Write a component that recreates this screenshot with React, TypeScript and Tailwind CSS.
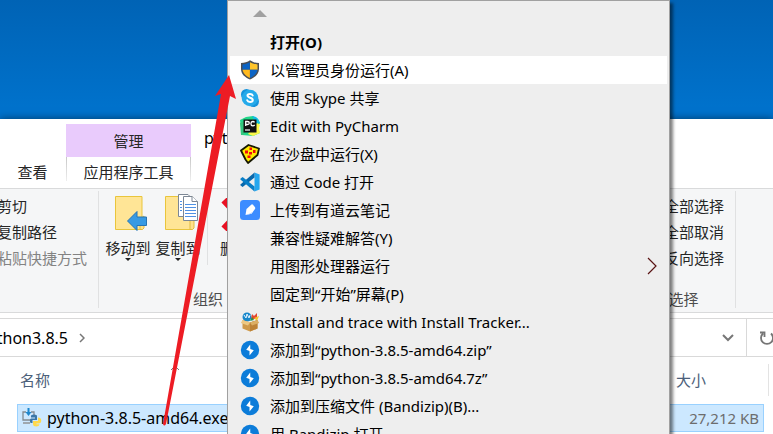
import React from "react";

const FONT = "font-['Noto_Sans','Noto_Sans_CJK_SC',sans-serif]";

function ShieldIcon() {
  return (
    <svg viewBox="0 0 20 20" className="w-5 h-5">
      <path d="M10 .2 C7.500 2 4.500 3 1 3 V9 C1 14 5 17.500 10 19.500 C15 17.500 19 14 19 9 V3 C15.500 3 12.500 2 10 .2Z" fill="#4b4f55" />
      <path d="M9.800 2.200 C7.500 3.500 5.500 4.200 2.500 4.400 V9.800 H9.800Z" fill="#0b64c5" />
      <path d="M10 2.200 C12.500 3.500 14.500 4.200 17.500 4.400 V9.800 H10Z" fill="#ffc52c" />
      <path d="M2.600 9.800 H9.900 V18 C6 16.300 3 13.500 2.600 9.800Z" fill="#ffb91e" />
      <path d="M10 9.800 H17.400 C17 13.500 14 16.300 10 18Z" fill="#0b64c5" />
    </svg>
  );
}

function SkypeIcon() {
  return (
    <svg viewBox="0 0 20 20" className="w-5 h-5">
      <circle cx="6.500" cy="6.500" r="5.500" fill="#1593dc" />
      <circle cx="13.500" cy="13.500" r="5.500" fill="#1593dc" />
      <circle cx="10" cy="10" r="8.300" fill="#25aaea" />
      <path d="M12.700 7.500 C12.300 6.300 11.200 6 9.900 6 C8.500 6 7.500 6.600 7.500 7.600 C7.500 10.300 12.800 9.200 12.800 12.100 C12.800 13.400 11.600 14 10.100 14 C8.700 14 7.600 13.500 7.200 12.300" fill="none" stroke="#fff" strokeWidth="2" strokeLinecap="round" />
    </svg>
  );
}

function PyCharmIcon() {
  return (
    <svg viewBox="0 0 20 20" className="w-5 h-5">
      <path d="M0 4 L6 1 L13 0 L18 3 L20 7 L17 11 L20 17 L13 20 L2 19Z" fill="#21d789" />
      <path d="M12 0 L16 1 L18 3 L20 7 L16 8Z" fill="#11bde4" />
      <path d="M17 7 L20 9 L19 12 L20 17 L13 20 L8 18Z" fill="#fcf84a" />
      <path d="M0 7 L4 5 V19 L1 19Z" fill="#35c77e" />
      <rect x="3.500" y="3.500" width="13" height="13" fill="#111" />
      <path d="M5.700 10 V5.500 H7.500 Q9.300 5.500 9.300 7 Q9.300 8.500 7.500 8.500 H5.700 M14.600 6.400 Q13.800 5.400 12.700 5.500 Q10.900 5.700 10.900 7.700 Q10.900 9.700 12.800 9.900 Q13.900 9.900 14.700 9" fill="none" stroke="#fff" strokeWidth="1.300" />
      <path d="M5 14 H10" stroke="#fff" strokeWidth="1.200" />
    </svg>
  );
}

function SandboxIcon() {
  return (
    <svg viewBox="0 0 20 20" className="w-5 h-5">
      <path d="M1 6.500 L8.500 1 L19 4.500 L17.500 11 L8 19 L5.500 15.500Z" fill="#ffeb00" stroke="#171700" strokeWidth="1.800" strokeLinejoin="round" />
      <g fill="#f00b0b">
        <rect x="9.500" y="3.500" width="2.500" height="2.500" />
        <rect x="5" y="6.500" width="3" height="3" />
        <rect x="9" y="8" width="3" height="2.500" />
        <rect x="13" y="6" width="2.500" height="3" />
        <rect x="7.500" y="11.500" width="3" height="2.500" />
      </g>
    </svg>
  );
}

function CodeIcon() {
  return (
    <svg viewBox="0 0 20 20" className="w-5 h-5">
      <path d="M14.500 .4 L19.600 2.600 V17.400 L14.500 19.600Z" fill="#25a7ef" />
      <path d="M14.500 .4 V5.500 L2.600 15 L.4 13.200 V12.500Z" fill="#0868ac" />
      <path d="M14.500 19.600 V14.500 L2.600 5 L.4 6.800 V7.500Z" fill="#087fc8" />
    </svg>
  );
}

function YoudaoIcon() {
  return (
    <svg viewBox="0 0 20 20" className="w-5 h-5">
      <rect width="20" height="20" rx="3.500" fill="#3c8cff" />
      <path d="M5.500 15 L6.500 9 L11.500 4.500 Q12.300 4 13 4.800 L15 7.200 Q15.500 8 15 9 L11.500 13.800Z" fill="#fff" />
      <path d="M5.500 15 L11.500 13.800 L13 11.700 Q9 14 5.500 15Z" fill="#b9d6ff" />
    </svg>
  );
}

function TrackerIcon() {
  return (
    <svg viewBox="0 0 20 20" className="w-5 h-5">
      <circle cx="7" cy="5" r="4.500" fill="#1787cb" />
      <path d="M4 3 L6 6 L7 2 L9 6 L10 3" fill="none" stroke="#e7f5ff" />
      <path d="M11 7 L12 2 L14 4 L17 1 L17 7Z" fill="#e5472f" />
      <path d="M14 6 L19 4 L17 9Z" fill="#f5c32f" />
      <path d="M10 9 L12 5 L14 8Z" fill="#2b9445" />
      <path d="M2.500 8 L10 10.500 L17.500 8 V16.500 L10 19.500 L2.500 16.500Z" fill="#d09a4a" />
      <path d="M10 10.500 L17.500 8 V16.500 L10 19.500Z" fill="#bd8236" />
      <path d="M2.500 8 L.8 11 L8 13.500 L10 10.500Z" fill="#edc883" />
      <path d="M17.500 8 L19.200 11 L12 13.500 L10 10.500Z" fill="#dcae63" />
    </svg>
  );
}

function BandizipIcon() {
  return (
    <svg viewBox="0 0 20 20" className="w-5 h-5">
      <circle cx="10" cy="10" r="9.200" fill="#0c7cd9" />
      <path d="M10.200 4.500 L6.200 9.800 L9.500 10.900 L9.500 15.500 L13.800 10.300 L10.300 9Z" fill="#fff" />
    </svg>
  );
}

const menuItems = [
  { label: "打开(O)", bold: true },
  { label: "以管理员身份运行(A)", icon: ShieldIcon, active: true },
  { label: "使用 Skype 共享", icon: SkypeIcon },
  { label: "Edit with PyCharm", icon: PyCharmIcon },
  { label: "在沙盘中运行(X)", icon: SandboxIcon },
  { label: "通过 Code 打开", icon: CodeIcon },
  { label: "上传到有道云笔记", icon: YoudaoIcon },
  { label: "兼容性疑难解答(Y)" },
  { label: "用图形处理器运行", submenu: true },
  { label: "固定到“开始”屏幕(P)" },
  { label: "Install and trace with Install Tracker...", icon: TrackerIcon },
  { label: "添加到“python-3.8.5-amd64.zip”", icon: BandizipIcon },
  { label: "添加到“python-3.8.5-amd64.7z”", icon: BandizipIcon },
  { label: "添加到压缩文件 (Bandizip)(B)...", icon: BandizipIcon },
  { label: "用 Bandizip 打开", icon: BandizipIcon },
];

function ContextMenu() {
  return (
    <div
      role="menu"
      className="absolute top-0 left-[227px] w-[443px] h-full overflow-hidden bg-[#eeeeee] border border-b-0 border-[#a0a0a0] shadow-[3px_3px_3px_rgba(0,0,0,0.5)]"
    >
      <div className="h-[27px] pl-[25px] pt-[9px]">
        <svg viewBox="0 0 14 7" className="w-[14px] h-[7px]">
          <path d="M7 0 L14 7 H0Z" fill="#a0a0a0" />
        </svg>
      </div>
      <div className="px-[2px]">
        {menuItems.map(({ label, icon: Icon, bold, active, submenu }) => (
          <button
            key={label}
            role="menuitem"
            className={`flex items-center w-full h-7 px-[10px] text-left text-black ${
              active ? "bg-white" : ""
            } ${bold ? "font-bold" : ""}`}
          >
            <span className="w-5 h-5 mr-[10px] shrink-0">{Icon && <Icon />}</span>
            <span className="flex-1 whitespace-nowrap">{label}</span>
            {submenu && (
              <svg viewBox="0 0 10 18" className="w-[10px] h-[18px]">
                <path d="M1 1 L9 9 L1 17" fill="none" stroke="#5a1414" strokeWidth="1.200" />
              </svg>
            )}
          </button>
        ))}
      </div>
    </div>
  );
}

function FolderIcon({ copy }: { copy?: boolean }) {
  return (
    <svg viewBox="0 0 34 38" className="w-[34px] h-[38px] shrink-0">
      <path d="M1.500 3.500 H28 V36.500 H1.500Z" fill="#ffe596" stroke="#e9c53c" />
      <path d="M26 36.500 V26 L30 23 V35 L28.500 36.500Z" fill="#ffe08a" stroke="#e2bb3f" />
      {copy ? (
        <g stroke="#7c8794" fill="#fff">
          <path d="M14.500 1.500 H24 L28 5.500 V23.500 H14.500Z" />
          <path d="M19.500 3.500 H28 L33.500 8.500 V27.500 H19.500Z" />
          <path d="M28 3.500 V8.500 H33.500" />
          <path d="M16 8.500 H18 M16 11.500 H18 M16 14.500 H18 M16 17.500 H18 M21 11.500 H32 M21 14.500 H32 M21 17.500 H32 M21 20.500 H32 M21 23.500 H32" stroke="#4f91e4" />
        </g>
      ) : (
        <path d="M13.500 28 L23 18.500 V24 H32.500 V32.500 H23 V37.500Z" fill="#389ae3" stroke="#2774b3" />
      )}
    </svg>
  );
}

function RibbonButton({ label, copy }: { label: string; copy?: boolean }) {
  return (
    <button className="flex flex-col items-center w-[50px] whitespace-nowrap leading-5">
      <span className="pl-[5px]">
        <FolderIcon copy={copy} />
      </span>
      <span className="mt-[7px]">{label}</span>
      <svg viewBox="0 0 6 3" className="w-[6px] h-[3px]">
        <path d="M0 0 H6 L3 3Z" fill="#222" />
      </svg>
    </button>
  );
}

function Ribbon() {
  return (
    <div className="flex h-[125px] pt-[2px] pb-1 bg-[#f5f6f7] border-y border-[#d9dadb] text-[#262626] leading-[26px]">
      <div className="flex justify-end w-[99px] pr-[11px] border-r border-[#e0e1e2]">
        <div className="flex flex-col items-start shrink-0 whitespace-nowrap pt-[2px]">
          <button>剪切</button>
          <button>复制路径</button>
          <button className="text-[#838383]">粘贴快捷方式</button>
        </div>
      </div>
      <div className="flex flex-col w-[218px] shrink-0">
        <div className="flex items-start h-[74px]">
          <div className="flex items-start w-[109px] h-full pl-1 pt-[2px] border-r border-[#e0e1e2]">
            <RibbonButton label="移动到" />
            <RibbonButton label="复制到" copy />
          </div>
          <button className="flex flex-col items-start pl-3 pt-[7px] leading-5">
            <svg viewBox="0 0 34 33" className="w-[34px] h-[33px]">
              <path d="M4 2 L31 31 M31 2 L4 31" stroke="#e81123" strokeWidth="7" />
            </svg>
            <span className="mt-[7px]">删除</span>
          </button>
        </div>
        <span className="mt-auto -mb-1 text-center text-[#4d4d4d]">组织</span>
      </div>
      <div className="flex flex-col w-[104px] mr-[37px] ml-auto border-r border-[#e0e1e2] whitespace-nowrap">
        <div className="flex flex-col items-end pr-[11px] pt-[2px]">
          <button>全部选择</button>
          <button>全部取消</button>
          <button>反向选择</button>
        </div>
        <span className="mt-auto -mb-1 text-center text-[#4d4d4d]">选择</span>
      </div>
    </div>
  );
}

function FileIcon() {
  return (
    <svg viewBox="0 0 20 20" className="w-5 h-5">
      <path d="M4 4 H1 V12 H9 M9 4 H12 V7" fill="none" stroke="#848b91" strokeWidth="1.300" />
      <path d="M1 15 H8" stroke="#9ba1a6" strokeWidth="1.800" />
      <path d="M6.500 0 V6" stroke="#1d87cd" strokeWidth="2" />
      <path d="M3.500 4 H9.500 L6.500 8Z" fill="#1d87cd" />
      <path d="M9 7.500 Q12 5.500 15 7.500 V12 H10.500 V15 H8.500 Q7 11.500 9 10.500 H13 V9.500 H9Z" fill="#3b77a8" />
      <path d="M16 9.500 Q19 9.500 19.200 12 Q19.500 15 17 15.500 H14.500 V16.200 H17.500 Q17 18.500 14.500 18.500 Q11 18.500 11 16 V13 H16Z" fill="#ffd94d" />
    </svg>
  );
}

function Explorer() {
  return (
    <div className="flex-1 bg-white shadow-[0_0_8px_rgba(0,0,0,0.5)]">
      <div className="flex items-start h-[69px] pt-[5px] text-[#262626]">
        <button className="w-[50px] h-[30px] mt-[33px] mr-4 pl-[15px] whitespace-nowrap">查看</button>
        <div className="flex flex-col w-[125px] shrink-0">
          <div className="flex items-center justify-center h-[33px] bg-[#e9cbfc]">管理</div>
          <button className="relative h-[30px] whitespace-nowrap">
            <span className="absolute inset-y-0 left-0 w-px h-6 bg-linear-to-b from-[#c8c8c8] to-[#eeeeee]" />
            应用程序工具
            <span className="absolute inset-y-0 right-0 w-px h-6 bg-linear-to-b from-[#c8c8c8] to-[#eeeeee]" />
          </button>
        </div>
        <span className="ml-[13px] mt-1 text-base/5 text-black">python3.8.5</span>
      </div>
      <Ribbon />
      <div className="flex items-center h-[39px] mt-[5px] border-y border-[#d9d9d9] text-black">
        <span className="flex justify-end w-[68px] whitespace-nowrap text-base/5">python3.8.5</span>
        <svg viewBox="0 0 6 10" className="w-[6px] h-[10px] ml-[11px]">
          <path d="M1 1 L5 5 L1 9" fill="none" stroke="#777" strokeWidth="1.500" />
        </svg>
        <button aria-label="历史记录" className="ml-auto mr-3">
          <svg viewBox="0 0 12 8" className="w-3 h-2">
            <path d="M1 1 L6 6 L11 1" fill="none" stroke="#777" strokeWidth="2" />
          </svg>
        </button>
        <button aria-label="刷新" className="flex items-center w-[27px] h-full pl-3 border-l border-[#d9d9d9]">
          <svg viewBox="0 0 16 16" className="w-4 h-4 shrink-0">
            <path d="M4 3.500 A6 6 0 1 0 12 3.500 M1 2.500 H5.500 V7" fill="none" stroke="#757575" strokeWidth="1.800" />
          </svg>
        </button>
      </div>
      <table className="w-full table-fixed">
        <thead>
          <tr className="h-[46px] text-[#4c607a]">
            <th className="pl-5 text-left font-normal">
              <span className="flex items-center">
                名称
                <svg viewBox="0 0 10 6" className="w-[10px] h-[6px] ml-[120px] mb-6">
                  <path d="M1 5 L5 1 L9 5" fill="none" stroke="#777" />
                </svg>
              </span>
            </th>
            <th className="w-[97px] font-normal">
              <div className="flex items-center h-8 border-r border-[#e3e3e3] mr-1">大小</div>
            </th>
          </tr>
        </thead>
      </table>
      <div className="flex items-center justify-between h-7 mt-px ml-[17px] mr-[9px] pl-1 pr-1 bg-[#cce8ff] border border-[#99d1ff]">
        <span className="flex items-center text-black">
          <FileIcon />
          <span className="ml-[5px] text-base/5">python-3.8.5-amd64.exe</span>
        </span>
        <span className="text-[#6d6d6d]">27,212 KB</span>
      </div>
    </div>
  );
}

export default function App() {
  return (
    <div
      className={`relative flex flex-col min-h-screen overflow-hidden pt-[119px] bg-linear-to-b from-[#0063b5] to-[#0072cc] to-25% text-[15px] leading-5 ${FONT}`}
    >
      <Explorer />
      <ContextMenu />
      <svg viewBox="0 0 80 360" className="absolute left-[160px] top-[74px] w-[80px] h-[360px] pointer-events-none">
        <path d="M69 1 L76 25 L70 22 L6 350 Q4 353 3 350 L61 20 L55 22Z" fill="#ed1c24" />
      </svg>
    </div>
  );
}
